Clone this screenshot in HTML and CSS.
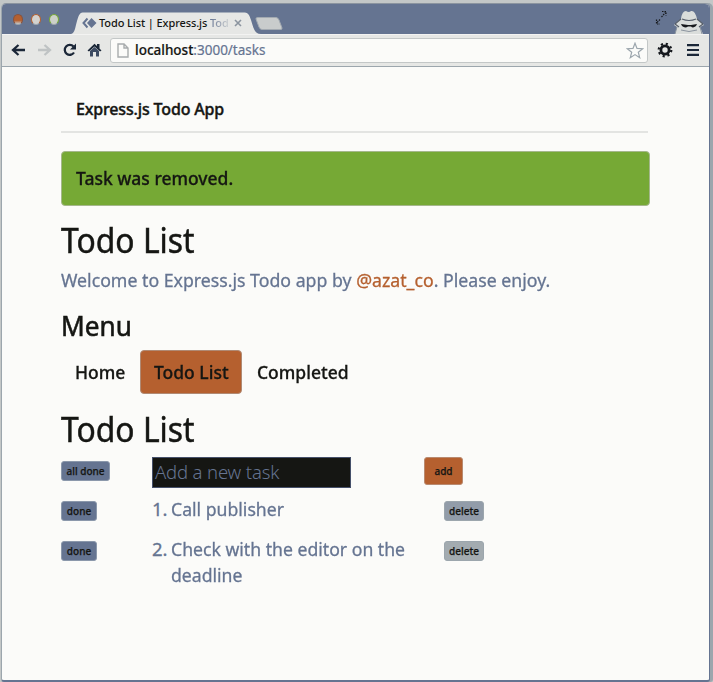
FILE: index.html
```
<!DOCTYPE html>
<html lang="en">
<head>
<meta charset="utf-8">
<title>Todo List | Express.js Todo App</title>
<link rel="stylesheet" href="styles.css">
</head>
<body>
<div class="window">
  <header class="titlebar">
    <div class="lights"><i class="light close"></i><i class="light min"></i><i class="light max"></i></div>
    <div class="tab">
      <svg class="tab-shape" width="190" height="22" viewBox="0 0 190 22"><path d="M0 22C4 21 4 16 6 9C8 2 9 .5 13 .5H172C177 .5 178 2 180 8C183 18 184 22 190 22Z" fill="#e6e7e5"/></svg>
      <div class="tab-content">
        <svg width="15" height="12" viewBox="0 0 15 12"><path d="M5.500 1.500L1.500 6l4 4.500" fill="none" stroke="#657491" stroke-width="2"/><path d="M9.500 1L14.500 6l-5 5L5 6Z" fill="#657491"/></svg>
        <span class="tab-title">Todo List | Express.js <span class="fade">Tod</span></span>
        <svg class="tab-x" width="8" height="8" viewBox="0 0 8 8"><path d="M1 1l6 6M7 1L1 7" stroke="#8b949f" stroke-width="1.600"/></svg>
      </div>
    </div>
    <svg class="new-tab" width="28" height="13" viewBox="0 0 28 13"><path d="M3 .5H21Q23 .5 24 3L27 11Q27.500 12.500 25 12.500H7Q5 12.500 4 10L1 2Q.5 .5 3 .5Z" fill="#c9cccc" stroke="#a3aab1"/></svg>
    <svg class="expand" width="12" height="16" viewBox="0 0 12 16"><path d="M6.500 7L10.500 2.500M7 1.500h4v4M5 9.500L1.500 13M1.500 9.500v4.500h3.500" fill="none" stroke="#17191c" stroke-width="1.200" stroke-dasharray="1.500 1"/></svg>
    <svg class="spy" width="32" height="24" viewBox="0 0 32 24"><path d="M2 24L4 17L1 15Q5 11 8 9Q9 1 13 1Q16 3 18 1Q22 0 24 9Q28 12 31 15L27 17L30 24Z" fill="#dadddb"/><path d="M9 9Q16 12 23 9M2 14L8 9M24 9L30 14M2 14L6 17M30 14L26 17" fill="none" stroke="#59616c" stroke-width="1.200"/><path d="M8 14L15 15H18L24 14L23 16Q20 18.500 18 16.500H15Q12 18.500 9 16Z" fill="#17191c"/><path d="M4 17L2 24M27 17L29 24M8 20Q16 23 24 20" fill="none" stroke="#8b949f"/></svg>
  </header>
  <div class="toolbar">
    <svg class="ic back" width="15" height="14" viewBox="0 0 15 14"><path d="M14 7H3M7.500 2L2 7l5.500 5" fill="none" stroke="#1b2738" stroke-width="2.300"/></svg>
    <svg class="ic fwd" width="15" height="14" viewBox="0 0 15 14"><path d="M1 7H12M7.500 2L13 7l-5.500 5" fill="none" stroke="#bfc3c4" stroke-width="2.300"/></svg>
    <svg class="ic reload" width="15" height="14" viewBox="0 0 15 14"><path d="M11.500 3.500A5 5 0 1 0 12 9.500" fill="none" stroke="#1b2738" stroke-width="2.300"/><path d="M14 .5V6.500H8Z" fill="#1b2738"/></svg>
    <svg class="ic home" width="15" height="14" viewBox="0 0 15 14"><path d="M.5 7.500L7.500 .8L10 3V1h2.500v4.500L14.500 7.500L13 8.500L7.500 3.500L2 8.500Z" fill="#1b2738"/><path d="M3 8L7.500 4L12 8V13.500H9V9H6V13.500H3Z" fill="#3c4a61"/></svg>
    <div class="address">
      <svg width="12" height="15" viewBox="0 0 12 15"><path d="M1 1H7L11 5V14H1ZM7 1V5H11" fill="#fbfbf9" stroke="#a8acad" stroke-width="1.400"/></svg>
      <span class="url"><b>localhost</b>:3000/tasks</span>
      <svg width="18" height="17" viewBox="0 0 18 17"><path d="M9 1.200L11 6.400L16.700 6.700L12.300 10.200L13.700 15.700L9 12.600L4.300 15.700L5.700 10.200L1.300 6.700L7 6.400Z" fill="#fbfbf9" stroke="#9ca6ad" stroke-width="1.200"/></svg>
    </div>
    <svg class="gear" width="16" height="16" viewBox="0 0 16 16"><circle cx="8" cy="8" r="6.300" fill="none" stroke="#15181d" stroke-width="2.200" stroke-dasharray="2.150 2.800"/><circle cx="8" cy="8" r="4.100" fill="none" stroke="#15181d" stroke-width="2.800"/></svg>
    <svg class="burger" width="12" height="12" viewBox="0 0 12 12"><path d="M0 1.200H12M0 6H12M0 10.800H12" stroke="#1b2738" stroke-width="2.200"/></svg>
  </div>
  <main class="page">
    <div class="brand"><span>Express.js Todo App</span></div>
    <div class="alert"><span>Task was removed.</span></div>
    <h1>Todo List</h1>
    <p class="lead">Welcome to Express.js Todo app by <a>@azat_co</a>. Please enjoy.</p>
    <h2 class="menu-title">Menu</h2>
    <nav><a class="n-home"><span>Home</span></a><a class="active"><span>Todo List</span></a><a class="n-comp"><span>Completed</span></a></nav>
    <h1 class="list-title">Todo List</h1>
    <div class="row add-row"><div><button class="btn all">all done</button></div><div><div class="field">Add a new task</div></div><div><button class="btn add">add</button></div></div>
    <div class="row"><div><button class="btn">done</button></div><div class="task"><span class="num">1.</span><span class="text">Call publisher</span></div><div><button class="btn del">delete</button></div></div>
    <div class="row"><div><button class="btn">done</button></div><div class="task"><span class="num">2.</span><span class="text">Check with the editor on the<br>deadline</span></div><div><button class="btn del pale">delete</button></div></div>
  </main>
</div>
</body>
</html>
```
FILE: styles.css
```
* { box-sizing: border-box; }
body { margin: 0; background: #c3c7c7; font-family: "Noto Sans", "Open Sans", sans-serif; color: #151613; }
svg { display: block; flex: none; }
.window { width: 709px; height: 679px; margin-left: 1px; border: 1px solid #657491; border-top-color: #8b949f; border-left-color: #9ca6ad; border-bottom-width: 2px; border-radius: 5px 5px 3px 3px; background: #fbfbf9; overflow: hidden; box-shadow: 3px 0 0 #9ca6ad; margin-top: 3px; }
.titlebar { height: 30px; background: #657491; display: flex; align-items: flex-end; }
.lights { display: flex; gap: 8px; padding: 0 0 9px 11px; width: 68px; }
.light { width: 10px; height: 11px; border-radius: 50%; border: 1px solid; }
.close { background: linear-gradient(#b5602f 60%, #c9cccc); border-color: #8c5239 #8c5239 #9ca6ad; }
.min { background: #d3d2cf; border-color: #b5602f #b5602f #9ca6ad; }
.max { background: #ccd0c8; border-color: #76a935 #76a935 #9ca6ad; }
.tab { width: 190px; height: 22px; display: grid; margin-left: 1px; }
.tab-shape, .tab-content { grid-area: 1 / 1; }
.tab-content { display: flex; align-items: center; padding-left: 11px; z-index: 1; }
.tab-title { font: 500 11px/20px "Noto Sans"; width: 130px; white-space: nowrap; margin-left: 2px; letter-spacing: -.1px; }
.fade { background: linear-gradient(90deg, #657491, #d0d3d4); -webkit-background-clip: text; background-clip: text; color: transparent; }
.tab-x { margin-left: 5px; }
.new-tab { margin: 0 0 4px -6px; }
.expand { margin: 0 6px 8px auto; }
.spy { margin-right: 4px; }
.toolbar { height: 33px; background: #e6e7e5; border-top: 1px solid #f3f3f2; border-bottom: 1px solid #9ca6ad; display: flex; align-items: center; padding: 0 0 1px 9px; }
.fwd { margin-left: 11px; }
.reload { margin-left: 10px; }
.home { margin-left: 10px; }
.address { display: flex; align-items: center; width: 538px; height: 25px; border: 1px solid #c3c7c7; border-radius: 3px; background: #fbfbf9; margin-left: 8px; padding: 0 3px 0 6px; }
.url { flex: 1; margin-left: 6px; font: 13.5px/20px "Noto Sans"; color: #657491; white-space: nowrap; -webkit-text-stroke: .2px; }
.url b { font-weight: 500; color: #151613; }
.gear { margin-left: 9px; }
.burger { margin-left: 14px; }
.page { padding: 19px 0 0 59px; width: 648px; }
.brand { height: 47px; margin-right: 2px; border-bottom: 2px solid #e3e4e2; padding-left: 15px; font-size: 16px; font-weight: 500; line-height: 46px; letter-spacing: -.16px; -webkit-text-stroke: .4px; }
.alert { height: 55px; margin-top: 18px; background: #76a935; border: 1px solid #a5b78c; border-radius: 4px; padding-left: 14px; font-size: 18.5px; font-weight: 500; line-height: 52px; -webkit-text-stroke: .3px; }
.alert span { display: inline-block; transform: scaleX(.945); transform-origin: left; }
h1 { margin: 13px 0 0; font-size: 34px; font-weight: 400; line-height: 42px; transform: scaleX(.937); transform-origin: left; -webkit-text-stroke: .5px; }
.lead { margin: 5px 0 0; font-size: 18.5px; line-height: 28px; color: #657491; white-space: nowrap; transform: scaleX(.957); transform-origin: left; -webkit-text-stroke: .3px; }
.lead a { color: #b5602f; }
h2 { margin: 13px 0 0; font-size: 28px; font-weight: 400; line-height: 36px; transform: scaleX(.935); transform-origin: left; -webkit-text-stroke: .6px; }
nav { display: flex; height: 44px; margin-top: 7px; font-size: 18.5px; font-weight: 500; line-height: 43px; white-space: nowrap; -webkit-text-stroke: .3px; }
nav span { display: inline-block; transform: scaleX(.945); transform-origin: left; }
.n-home { width: 79px; padding-left: 14px; }
.active { width: 102px; padding-left: 13px; border: 1px solid #b08a74; background: #b5602f; border-radius: 4px; line-height: 41px; }
.n-comp { padding-left: 15px; }
h1.list-title { margin-top: 14px; }
.row { display: grid; grid-template-columns: 91px 272px 1fr; }
.row.add-row { margin-top: 7px; height: 35px; }
.row + .row { height: 40px; }
.row > div { min-width: 0; }
.btn { display: block; font: 500 10px/16px "Noto Sans"; width: 36px; height: 20px; margin-top: 9px; padding: 0; border: 1px solid #8b98ab; border-radius: 3px; background: #657491; color: #151613; text-align: center; white-space: nowrap; -webkit-text-stroke: .25px; }
.all { width: 49px; margin-top: 4px; }
.btn.add { width: 39px; height: 28px; margin: 0; background: #b5602f; border-color: #b98a70; }
.btn.del { width: 40px; margin-left: 20px; background: #929ca9; border-color: #9ca6ad; }
.btn.pale { background: #a3abb0; }
.field { width: 199px; height: 31px; border: 1px solid #45506a; background: #151613; color: #657491; font-size: 18.5px; font-weight: 300; line-height: 28px; padding-left: 2px; white-space: nowrap; letter-spacing: -.15px; }
.task { display: flex; font-size: 18.5px; line-height: 25.5px; color: #657491; padding-top: 4px; white-space: nowrap; -webkit-text-stroke: .3px; }
.num { width: 19px; flex: none; }
.task .text { transform: scaleX(.953); transform-origin: left; }
```
